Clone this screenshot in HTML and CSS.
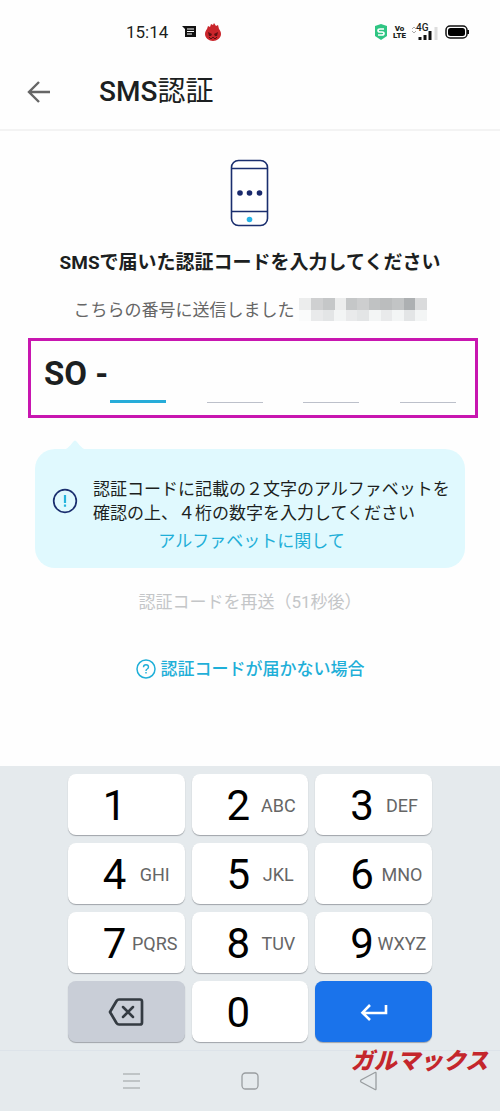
FILE: index.html
```html
<!DOCTYPE html>
<html lang="ja">
<head>
<meta charset="utf-8">
<meta name="viewport" content="width=device-width, initial-scale=1">
<title>SMS認証</title>
<link rel="stylesheet" href="styles.css">
</head>
<body>
<div class="status">
  <span class="clock">15:14</span>
  <svg class="status-msg" width="15" height="14" viewBox="0 0 15 14" aria-hidden="true"><path d="M0 1h14v11H3V4z" fill="#111"/><path d="M5 4h7M5 6.500h7M5 9h5" stroke="#fff" stroke-width="1"/></svg>
  <svg width="16" height="18" viewBox="0 0 16 18" aria-hidden="true"><path d="M2 6 3 3l2 1 1-3 2 1 1-2 2 3 2-1 1 4c1 1 2 3 2 5 0 4-4 7-8 7s-8-3-8-7c0-2 1-4 2-5z" fill="#c9252b"/><path d="M3 9l4 2-1 2H4zM13 9l-4 2 1 2h2z" fill="#5d1113"/><path d="M4 14l2 2 2-2 2 2 2-2" fill="none" stroke="#5d1113"/></svg>
  <div class="status-right">
    <svg width="14" height="16" viewBox="0 0 14 16" aria-hidden="true"><path d="M1 2l6-2 6 2v10l-6 4-6-4z" fill="#2fc583"/><path d="M10 5H6Q4 5 4 6.500T6 8h2q2 0 2 1.500T8 11H4" fill="none" stroke="#fff" stroke-width="1.600"/></svg>
    <span class="volte"><span>Vo</span><span>LTE</span></span>
    <span class="signal">
      <svg width="27" height="17" viewBox="0 0 27 17" aria-hidden="true"><path d="M1 5l2-2 2 2M1 7l2 2 2-2" fill="none" stroke="#aaa"/><path d="M9 13v3M14 11v5M19 7v9" stroke="#111" stroke-width="3"/><path d="M25 3v13" stroke="#ddd" stroke-width="3"/></svg>
      <span class="net">4G</span>
    </span>
    <svg width="24" height="14" viewBox="0 0 24 14" aria-hidden="true"><rect x="1" y="1" width="21" height="12" rx="4" fill="none" stroke="#111" stroke-width="1.500"/><rect x="3" y="3" width="17" height="8" rx="2.500" fill="#000"/><path d="M23 5v4" stroke="#111" stroke-width="2"/></svg>
  </div>
</div>

<header class="appbar">
  <button class="back" type="button" aria-label="戻る">
    <svg width="24" height="24" viewBox="0 0 24 24"><path d="M23 12H3M12 2 2 12l10 10" fill="none" stroke="#666" stroke-width="2.400"/></svg>
  </button>
  <h1 class="title"><span class="latin">SMS</span>認証</h1>
</header>

<main class="content">
  <svg class="phone" width="40" height="68" viewBox="0 0 40 68" aria-hidden="true"><rect x="1.500" y="1.500" width="36" height="65" rx="7" fill="#fff" stroke="#1a2e6e" stroke-width="1.600"/><path d="M1.500 9.500h36M1.500 52.500h36" stroke="#1a2e6e" stroke-width="1.500"/><g fill="#1a2a6c"><circle cx="10" cy="34" r="2.800"/><circle cx="19.500" cy="34" r="2.800"/><circle cx="29.500" cy="34" r="2.800"/></g><circle cx="19.500" cy="60.500" r="2.800" fill="#25b4e8"/></svg>
  <h2 class="lead">SMSで届いた認証コードを入力してください</h2>
  <p class="sent">こちらの番号に送信しました
    <svg class="mask" width="128" height="24" viewBox="0 0 128 24" aria-hidden="true">
      <path fill="#eceded" d="M0 0h12v12H0zM35 0h12v12H35z"/><path fill="#cfd0d1" d="M12 0h12v12H12z"/><path fill="#c5c7c8" d="M24 0h12v12H24zM47 0h12v12H47z"/><path fill="#cdcecf" d="M58 0h12v12H58z"/><path fill="#c0c2c3" d="M70 0h12v12H70z"/><path fill="#bbbdbe" d="M81 0h12v12H81z"/><path fill="#c2c4c5" d="M93 0h12v12H93z"/><path fill="#adb0b2" d="M105 0h12v12h-12z"/><path fill="#dadbdc" d="M116 0h12v12h-12z"/>
      <path fill="#fafbfb" d="M0 12h12v11H0z"/><path fill="#e9eaeb" d="M12 12h12v11H12zM47 12h12v11H47zM81 12h12v11H81z"/><path fill="#e3e5e6" d="M24 12h12v11H24zM58 12h12v11H58zM105 12h12v11h-12z"/><path fill="#f3f5f5" d="M35 12h12v11H35zM70 12h12v11H70zM93 12h12v11H93zM116 12h12v11h-12z"/>
    </svg>
  </p>

  <div class="code">
    <span class="prefix">SO -</span>
    <div class="digits">
      <input class="digit digit-active" type="text" inputmode="numeric" maxlength="1" aria-label="1桁目">
      <input class="digit" type="text" inputmode="numeric" maxlength="1" aria-label="2桁目">
      <input class="digit" type="text" inputmode="numeric" maxlength="1" aria-label="3桁目">
      <input class="digit" type="text" inputmode="numeric" maxlength="1" aria-label="4桁目">
    </div>
  </div>

  <section class="tip">
    <svg class="tip-tail" width="24" height="10" viewBox="0 0 24 10" aria-hidden="true"><path d="M0 10Q5 9 10 2 12-1 14 2 19 9 24 10z" fill="#e0f9fe"/></svg>
    <div class="tip-row">
      <svg class="tip-icon" width="26" height="26" viewBox="0 0 26 26" aria-hidden="true"><circle cx="13" cy="13" r="11.300" fill="none" stroke="#1a2e6e" stroke-width="1.700"/><path d="M13 7v8M13 16.500v2.200" stroke="#25b4dc" stroke-width="2.200"/></svg>
      <p class="tip-text">認証コードに記載の２文字のアルファベットを<br>確認の上、４桁の数字を入力してください</p>
    </div>
    <a class="tip-link" href="#alphabet">アルファベットに関して</a>
  </section>

  <button class="resend" type="button" disabled>認証コードを再送（51秒後）</button>
  <a class="help" href="#help">
    <svg width="20" height="20" viewBox="0 0 20 20" aria-hidden="true"><circle cx="10" cy="10" r="9" fill="none" stroke="#1fafd8" stroke-width="1.500"/><path d="M7.500 8.200Q7.500 5.800 10 5.800T12.500 8Q12.500 9.200 11.200 10 10 10.700 10 12M10 13v1.600" fill="none" stroke="#1fafd8" stroke-width="1.400"/></svg>
    認証コードが届かない場合
  </a>
</main>

<footer class="bottom">
  <div class="keys">
    <button class="key" type="button"><span class="num">1</span></button>
    <button class="key" type="button"><span class="num">2</span><span class="abc">ABC</span></button>
    <button class="key" type="button"><span class="num">3</span><span class="abc">DEF</span></button>
    <button class="key" type="button"><span class="num">4</span><span class="abc">GHI</span></button>
    <button class="key" type="button"><span class="num">5</span><span class="abc">JKL</span></button>
    <button class="key" type="button"><span class="num">6</span><span class="abc">MNO</span></button>
    <button class="key" type="button"><span class="num">7</span><span class="abc">PQRS</span></button>
    <button class="key" type="button"><span class="num">8</span><span class="abc">TUV</span></button>
    <button class="key" type="button"><span class="num">9</span><span class="abc">WXYZ</span></button>
    <button class="key key-delete" type="button" aria-label="削除"><svg width="36" height="28" viewBox="0 0 36 28"><path d="M11 1.500h21q2 0 2 2v21q0 2-2 2H11q-1.500 0-2.500-1.500L2 14 8.500 3Q9.500 1.500 11 1.500z" fill="none" stroke="#343b42" stroke-width="2.700" stroke-linejoin="round"/><path d="M15 9l10 10M25 9 15 19" stroke="#343b42" stroke-width="2.500" stroke-linecap="round"/></svg></button>
    <button class="key" type="button"><span class="num">0</span></button>
    <button class="key key-enter" type="button" aria-label="確定"><svg width="28" height="18" viewBox="0 0 28 18"><path d="M26 2v8H3M10 2 2.500 9.700 10 17" fill="none" stroke="#fff" stroke-width="2.600"/></svg></button>
  </div>
  <nav class="nav">
    <button class="nav-btn" type="button" aria-label="メニュー"><svg width="18" height="18" viewBox="0 0 18 18"><path d="M1 2h17M1 9h17M1 16h17" stroke="#999da0" stroke-width="1.200"/></svg></button>
    <button class="nav-btn" type="button" aria-label="ホーム"><svg width="18" height="18" viewBox="0 0 18 18"><rect x="1" y="1" width="16" height="16" rx="3.500" fill="none" stroke="#999da0" stroke-width="1.300"/></svg></button>
    <button class="nav-btn" type="button" aria-label="戻る"><svg width="20" height="20" viewBox="0 0 20 20"><path d="M17 2v16q0 1-1 .5L2 11q-1-1 0-2L16 1.500q1-.5 1 .5z" fill="none" stroke="#999da0" stroke-width="1.300"/></svg></button>
    <span class="brand">ガルマックス</span>
  </nav>
</footer>
</body>
</html>
```

FILE: styles.css
```css
* { box-sizing: border-box; }

body {
  margin: 0;
  min-height: 100vh;
  display: flex;
  flex-direction: column;
  background: #fefefe;
  color: #1c1f21;
  font-family: Roboto, "Noto Sans CJK JP", sans-serif;
  font-size: 17px;
  line-height: 24px;
}

h1, h2, p { margin: 0; }
button { border: 0; padding: 0; background: none; font: inherit; color: inherit; }
a { color: #1fafd8; text-decoration: none; }
svg { display: block; flex: none; }

.status {
  display: flex;
  align-items: center;
  height: 64px;
  padding: 0 31px 0 126px;
}
.clock { font-size: 17px; }
.status-msg { margin: 0 8px 0 14px; }
.status-right {
  display: flex;
  align-items: center;
  gap: 5px;
  margin-left: auto;
}
.volte {
  display: flex;
  flex-direction: column;
  align-items: center;
  font-size: 8px;
  font-weight: 900;
  line-height: 7px;
}
.signal { position: relative; margin-right: 2px; }
.net {
  position: absolute;
  left: 5px;
  top: -1px;
  font-size: 10px;
  font-weight: 500;
  line-height: 10px;
}

.appbar {
  display: flex;
  align-items: center;
  gap: 48px;
  height: 67px;
  padding: 0 27px 9px;
  border-bottom: 2px solid #f3f3f3;
}
.back { display: block; }
.title { font-size: 28px; font-weight: 400; line-height: 36px; }
.latin { font-weight: 500; }

.content {
  flex: 1;
  display: flex;
  flex-direction: column;
  align-items: center;
  padding: 28px 28px 40px;
}
.lead {
  margin-top: 21px;
  font-size: 19px;
  font-weight: 700;
  line-height: 30px;
}
.sent {
  display: flex;
  align-items: center;
  gap: 4px;
  margin-top: 20px;
  color: #666;
}

.code {
  display: flex;
  align-items: flex-start;
  gap: 2px;
  align-self: stretch;
  height: 80px;
  margin: 16px -6px 0 0;
  padding: 12px 19px 12px 13px;
  border: 3px solid #c816b0;
}
.prefix {
  flex: none;
  font-size: 33px;
  font-weight: 700;
  line-height: 42px;
}
.digits {
  flex: 1;
  display: flex;
  justify-content: space-between;
}
.digit {
  width: 56px;
  height: 50px;
  padding: 0;
  border: 0;
  border-bottom: 1px solid #bcc0ca;
  border-radius: 0;
  outline: 0;
  background: none;
  font: inherit;
  font-size: 33px;
  text-align: center;
}
.digit-active { border-bottom: 3px solid #27acd9; }

.tip {
  position: relative;
  align-self: stretch;
  display: flex;
  flex-direction: column;
  align-items: center;
  gap: 4px;
  margin: 31px 7px 0;
  padding: 28px 14px 15px 17px;
  border-radius: 20px;
  background: #e0f9fe;
}
.tip-tail { position: absolute; left: 28px; top: -9px; }
.tip-row {
  display: flex;
  align-items: center;
  align-self: stretch;
  gap: 15px;
}

.resend { margin-top: 22px; color: #c4c6c8; }
.help {
  display: flex;
  align-items: center;
  gap: 5px;
  margin-top: 43px;
  font-weight: 500;
}

.bottom { background: #e5eaed; }
.keys {
  display: grid;
  grid-template-columns: repeat(3, 1fr);
  gap: 8px 7px;
  padding: 8px 68px;
}
.key {
  display: grid;
  grid-template-columns: 26px 54px;
  align-items: center;
  justify-content: end;
  justify-items: center;
  height: 61px;
  padding: 2px 3px 0 0;
  border-radius: 8px;
  background: #fff;
  box-shadow: 0 1px 1px #9fa4a9;
}
.num { color: #000; font-size: 42px; line-height: 59px; }
.abc { color: #666; font-size: 18px; }
.key-delete, .key-enter {
  display: flex;
  justify-content: center;
  padding: 0;
}
.key-delete { background: #c9ced7; }
.key-enter { background: #1a73eb; }

.nav {
  position: relative;
  display: flex;
  justify-content: center;
  height: 61px;
  border-top: 1px solid #dde3e9;
}
.nav-btn {
  width: 119px;
  display: flex;
  align-items: center;
  justify-content: center;
}
.brand {
  position: absolute;
  right: 12px;
  top: -4px;
  color: #c4262c;
  font-family: "Noto Sans CJK JP", sans-serif;
  font-size: 23px;
  font-style: italic;
  font-weight: 900;
}
```
